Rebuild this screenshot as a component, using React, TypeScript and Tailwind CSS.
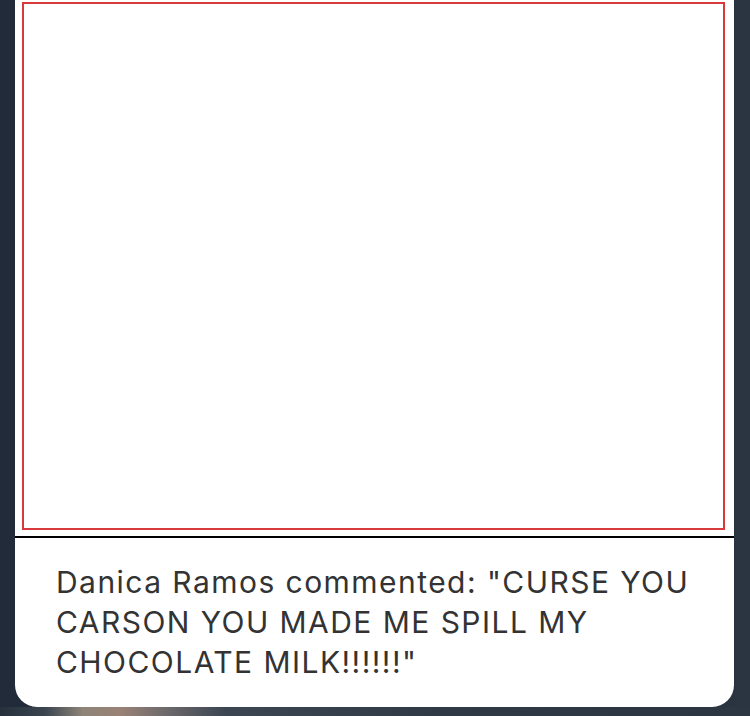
export default function App() {
  return (
    <div className="flex h-[716px] w-[750px] flex-col bg-[linear-gradient(90deg,#222b39_0%,#1d2634_40%,#232c3a_80%,#2b3542_100%)]">
      <div className="mx-[15px] flex h-[707px] w-[719px] flex-col rounded-b-[22px] bg-white">
        <div className="ml-[7px] mt-[2px] h-[528px] w-[703px] border-2 border-[#d83a3c]" />
        <div className="mt-[6px] h-[2px] w-full bg-black" />
        <p className="px-[41px] pt-[24px] font-['Inter',sans-serif] text-[30px] leading-[40px] tracking-[1.45px] text-[#333333]">
          Danica Ramos commented: "CURSE YOU CARSON YOU MADE ME SPILL MY
          CHOCOLATE MILK!!!!!!"
        </p>
      </div>
      <div className="h-[9px] w-full bg-[linear-gradient(90deg,#26303c_0%,#3a4550_6%,#8e8478_11%,#9a8276_16%,#6e6a6c_22%,#3c4652_30%,#2f3945_60%,#2c3542_100%)]" />
    </div>
  );
}
